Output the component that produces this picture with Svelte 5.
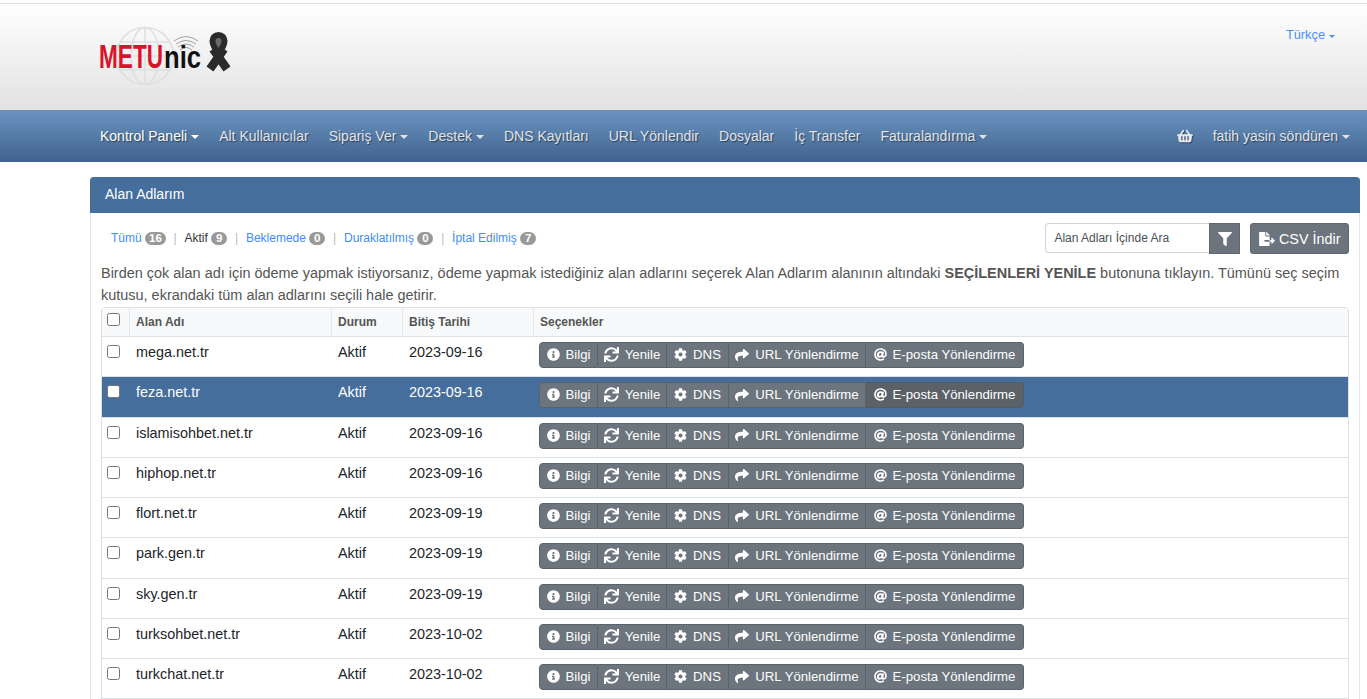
<script>
  // --- DATA ---
  const menu = [
    { label: "Kontrol Paneli", caret: true, active: true },
    { label: "Alt Kullanıcılar" },
    { label: "Sipariş Ver", caret: true },
    { label: "Destek", caret: true },
    { label: "DNS Kayıtları" },
    { label: "URL Yönlendir" },
    { label: "Dosyalar" },
    { label: "İç Transfer" },
    { label: "Faturalandırma", caret: true }
  ];

  const tabs = [
    { label: "Tümü", count: 16 },
    { label: "Aktif", count: 9, current: true },
    { label: "Beklemede", count: 0 },
    { label: "Duraklatılmış", count: 0 },
    { label: "İptal Edilmiş", count: 7 }
  ];

  const domains = [
    { name: "mega.net.tr", end: "2023-09-16" },
    { name: "feza.net.tr", end: "2023-09-16", hover: true },
    { name: "islamisohbet.net.tr", end: "2023-09-16" },
    { name: "hiphop.net.tr", end: "2023-09-16" },
    { name: "flort.net.tr", end: "2023-09-19" },
    { name: "park.gen.tr", end: "2023-09-19" },
    { name: "sky.gen.tr", end: "2023-09-19" },
    { name: "turksohbet.net.tr", end: "2023-10-02" },
    { name: "turkchat.net.tr", end: "2023-10-02" }
  ];

  const icons = {
    info: "M256 8C119 8 8 119.083 8 256c0 136.997 111.083 248 248 248s248-111.003 248-248C504 119.083 392.997 8 256 8zm0 110c23.196 0 42 18.804 42 42s-18.804 42-42 42-42-18.804-42-42 18.804-42 42-42zm56 254c0 6.627-5.373 12-12 12h-88c-6.627 0-12-5.373-12-12v-24c0-6.627 5.373-12 12-12h12v-64h-12c-6.627 0-12-5.373-12-12v-24c0-6.627 5.373-12 12-12h64c6.627 0 12 5.373 12 12v100h12c6.627 0 12 5.373 12 12v24z",
    sync: "M440.65 12.57l4 82.77A247.16 247.16 0 0 0 255.83 8C134.73 8 33.91 94.92 12.29 209.82A12 12 0 0 0 24.09 224h49.05a12 12 0 0 0 11.67-9.26 175.91 175.91 0 0 1 317-56.94l-101.46-4.86a12 12 0 0 0-12.57 12v47.41a12 12 0 0 0 12 12H500a12 12 0 0 0 12-12V12a12 12 0 0 0-12-12h-47.37a12 12 0 0 0-11.98 12.57zM255.83 432a175.61 175.61 0 0 1-146-77.8l101.8 4.87a12 12 0 0 0 12.57-12v-47.4a12 12 0 0 0-12-12H12a12 12 0 0 0-12 12V500a12 12 0 0 0 12 12h47.35a12 12 0 0 0 12-12.6l-4.15-82.57A247.17 247.17 0 0 0 255.83 504c121.11 0 221.93-86.92 243.55-201.82a12 12 0 0 0-11.8-14.18h-49.05a12 12 0 0 0-11.67 9.26A175.86 175.86 0 0 1 255.83 432z",
    cog: "M487.4 315.7l-42.6-24.6c4.3-23.2 4.3-47 0-70.2l42.6-24.6c4.9-2.8 7.1-8.6 5.5-14-11.1-35.6-30-67.8-54.7-94.6-3.8-4.1-10-5.1-14.8-2.3L380.8 110c-17.9-15.4-38.5-27.3-60.8-35.1V25.8c0-5.6-3.9-10.5-9.4-11.7-36.7-8.2-74.3-7.8-109.2 0-5.5 1.2-9.4 6.1-9.4 11.7V75c-22.2 7.9-42.8 19.8-60.8 35.1L88.7 85.5c-4.9-2.8-11-1.9-14.8 2.3-24.7 26.7-43.6 58.9-54.7 94.6-1.7 5.4.6 11.2 5.5 14L67.3 221c-4.3 23.2-4.3 47 0 70.2l-42.6 24.6c-4.9 2.8-7.1 8.6-5.5 14 11.1 35.6 30 67.8 54.7 94.6 3.8 4.1 10 5.1 14.8 2.3l42.6-24.6c17.9 15.4 38.5 27.3 60.8 35.1v49.2c0 5.6 3.9 10.5 9.4 11.7 36.7 8.2 74.3 7.8 109.2 0 5.5-1.2 9.4-6.1 9.4-11.7v-49.2c22.2-7.9 42.8-19.8 60.8-35.1l42.6 24.6c4.9 2.8 11 1.9 14.8-2.3 24.7-26.7 43.6-58.9 54.7-94.6 1.5-5.5-.7-11.3-5.6-14.1zM256 336c-44.1 0-80-35.9-80-80s35.9-80 80-80 80 35.9 80 80-35.9 80-80 80z",
    share: "M503.691 189.836L327.687 37.851C312.281 24.546 288 35.347 288 56.015v80.053C127.371 137.907 0 170.1 0 322.326c0 61.441 39.581 122.309 83.333 154.132 13.653 9.931 33.111-2.533 28.077-18.631C66.066 312.814 132.917 274.316 288 272.085V360c0 20.7 24.3 31.453 39.687 18.164l176.004-152c11.071-9.562 11.086-26.753 0-36.328z",
    at: "M256 8C118.941 8 8 118.919 8 256c0 137.059 110.919 248 248 248 48.154 0 95.342-14.14 135.408-40.223 12.005-7.815 14.625-24.288 5.552-35.372l-10.177-12.433c-7.671-9.371-21.179-11.667-31.373-5.129C325.92 429.757 291.314 440 256 440c-101.458 0-184-82.542-184-184S154.542 72 256 72c100.139 0 184 57.619 184 160 0 38.786-21.093 79.742-58.17 83.693-17.349-.454-16.91-12.857-13.476-30.024l23.433-121.11C394.653 149.75 383.308 136 368.225 136h-44.981a13.518 13.518 0 0 0-13.432 11.993l-.01.092c-14.697-17.901-40.448-21.775-59.971-21.775-74.58 0-137.831 62.234-137.831 151.46 0 65.303 36.785 105.87 96 105.87 26.984 0 57.369-15.637 74.991-38.333 9.522 34.104 40.613 34.103 70.71 34.103C462.609 379.41 504 307.798 504 232 504 95.653 394.023 8 256 8zm-21.68 304.43c-22.249 0-36.07-15.623-36.07-40.771 0-44.993 30.779-72.729 58.63-72.729 22.292 0 35.601 15.241 35.601 40.77 0 45.061-33.875 72.73-58.161 72.73z",
    basket: "M576 216v16c0 13.255-10.745 24-24 24h-8l-26.113 182.788C514.509 462.435 494.257 480 470.37 480H105.63c-23.887 0-44.139-17.565-47.518-41.212L32 256h-8c-13.255 0-24-10.745-24-24v-16c0-13.255 10.745-24 24-24h67.341l106.78-146.821c10.395-14.292 30.407-17.453 44.701-7.058 14.293 10.395 17.453 30.408 7.058 44.701L170.477 192h235.046L326.12 82.821c-10.395-14.292-7.234-34.306 7.059-44.701 14.291-10.395 34.306-7.235 44.701 7.058L484.659 192H552c13.255 0 24 10.745 24 24zM312 392V280c0-13.255-10.745-24-24-24s-24 10.745-24 24v112c0 13.255 10.745 24 24 24s24-10.745 24-24zm112 0V280c0-13.255-10.745-24-24-24s-24 10.745-24 24v112c0 13.255 10.745 24 24 24s24-10.745 24-24zm-224 0V280c0-13.255-10.745-24-24-24s-24 10.745-24 24v112c0 13.255 10.745 24 24 24s24-10.745 24-24z",
    filter: "M487.976 0H24.028C2.71 0-8.047 25.866 7.058 40.971L192 225.941V432c0 7.831 3.821 15.17 10.237 19.662l80 55.98C298.02 518.69 320 507.493 320 487.98V225.941l184.947-184.97C520.021 25.896 509.338 0 487.976 0z",
    fileExport: "M384 121.9c0-6.3-2.5-12.4-7-16.9L279.1 7c-4.5-4.5-10.6-7-17-7H256v128h128v-6.1zM192 336v-32c0-8.84 7.16-16 16-16h176V160H248c-13.2 0-24-10.8-24-24V0H24C10.7 0 0 10.7 0 24v464c0 13.3 10.7 24 24 24h336c13.3 0 24-10.7 24-24V352H208c-8.84 0-16-7.16-16-16zm379.05-28.02l-95.7-96.43c-10.06-10.14-27.36-3.01-27.36 11.27V288H384v64h63.99v65.18c0 14.28 17.29 21.41 27.36 11.27l95.7-96.43c6.6-6.65 6.6-17.39 0-24.04z"
  };

  const actions = [
    { label: "Bilgi", icon: "info", w: 59, size: 13 },
    { label: "Yenile", icon: "sync", w: 69, size: 15 },
    { label: "DNS", icon: "cog", w: 62, size: 13 },
    { label: "URL Yönlendirme", icon: "share", w: 137, size: 14 },
    { label: "E-posta Yönlendirme", icon: "at", w: 158, size: 13 }
  ];
</script>

<div class="page">
  <header class="top">
    <div class="logo">
      <svg width="140" height="66" viewBox="0 0 140 66">
        <!-- globe -->
        <g fill="none" stroke="#e0e0e0" stroke-width="1.6">
          <circle cx="46" cy="30" r="28.5" />
          <ellipse cx="46" cy="30" rx="14" ry="28.5" />
          <path d="M46 1.5v57M21 16h50M21 44h50M17.5 30h57" />
        </g>
        <!-- wifi arcs -->
        <g fill="none" stroke="#9a9a9a" stroke-width=".9">
          <path d="M75 15q12-9 24 0" />
          <path d="M77 18q10-7 20 0" />
          <path d="M79 21q8-6 16 0" />
          <path d="M81 24q6-5 12 0" />
        </g>
        <text class="logo-metu" x="0" y="42" textLength="64" lengthAdjust="spacingAndGlyphs">METU</text>
        <text class="logo-nic" x="65" y="42" textLength="37" lengthAdjust="spacingAndGlyphs">nic</text>
        <!-- ribbon -->
        <path d="M125 23 L111 43 M114 23 L128 43" stroke="#2b2b2b" stroke-width="8.500" fill="none" />
        <path d="M119.500 9c-3.500 0-6 2.500-6 6 0 3.500 2.600 8 6 12 3.400-4 6-8.500 6-12 0-3.500-2.500-6-6-6z" fill="#6a6a6a" stroke="#2b2b2b" stroke-width="6" />
      </svg>
    </div>
    <a class="lang" href="#lang">Türkçe<span class="caret small"></span></a>
  </header>

  <nav class="nav">
    <ul class="nav-left">
      {#each menu as m}
        <li class:active={m.active}>{m.label}{#if m.caret}<span class="caret"></span>{/if}</li>
      {/each}
    </ul>
    <div class="nav-right">
      <svg class="basket" viewBox="0 0 576 512"><path d={icons.basket} /></svg>
      <span>fatih yasin söndüren<span class="caret"></span></span>
    </div>
  </nav>

  <section class="panel">
    <h2 class="panel-head">Alan Adlarım</h2>
    <div class="panel-body">
      <div class="toolbar">
        <div class="tabs">
          {#each tabs as t, i}
            {#if i > 0}<span class="sep">|</span>{/if}
            <span class="tab" class:current={t.current}>{t.label} <span class="count">{t.count}</span></span>
          {/each}
        </div>
        <div class="tools">
          <div class="search">
            <span class="search-input">Alan Adları İçinde Ara</span>
            <span class="search-btn"><svg viewBox="0 0 512 512"><path d={icons.filter} /></svg></span>
          </div>
          <span class="csv"><svg viewBox="0 0 576 512"><path d={icons.fileExport} /></svg>CSV İndir</span>
        </div>
      </div>

      <p class="note">Birden çok alan adı için ödeme yapmak istiyorsanız, ödeme yapmak istediğiniz alan adlarını seçerek Alan Adlarım alanının altındaki <b>SEÇİLENLERİ YENİLE</b> butonuna tıklayın. Tümünü seç seçim kutusu, ekrandaki tüm alan adlarını seçili hale getirir.</p>

      <div class="table">
        <div class="row head">
          <div class="cell c-check"><span class="check"></span></div>
          <div class="cell c-name">Alan Adı</div>
          <div class="cell c-status">Durum</div>
          <div class="cell c-date">Bitiş Tarihi</div>
          <div class="cell c-opts">Seçenekler</div>
        </div>
        {#each domains as d}
          <div class="row body" class:hover={d.hover}>
            <div class="cell c-check"><span class="check"></span></div>
            <div class="cell c-name">{d.name}</div>
            <div class="cell c-status">Aktif</div>
            <div class="cell c-date">{d.end}</div>
            <div class="cell c-opts">
              <div class="btn-group">
                {#each actions as a, i}
                  <span class="btn" class:btn-hover={d.hover && i === 4} style="width: {a.w}px">
                    <svg width={a.size} height={a.size} viewBox="0 0 512 512"><path d={icons[a.icon]} /></svg>{a.label}
                  </span>
                {/each}
              </div>
            </div>
          </div>
        {/each}
      </div>
    </div>
  </section>
</div>

<style>
  :global(html), :global(body) { overflow: hidden; background: #fff; }

  .page {
    height: 699px;
    overflow: hidden;
    font-family: "Liberation Sans", Arial, sans-serif;
    font-size: 14px;
    color: #212529;
  }

  /* --- HEADER --- */
  .top {
    height: 106px;
    margin-top: 3px;
    border-top: 1px solid #ddd;
    background: linear-gradient(to bottom, #fff 0%, #e2e2e2 100%);
    display: flex;
    justify-content: space-between;
    padding: 0 32px 0 99px;
  }
  .logo { padding-top: 22px; height: 66px; }
  .logo-metu { font: bold 33px "Liberation Sans", sans-serif; fill: #d9132a; }
  .logo-nic { font: bold 32px "Liberation Sans", sans-serif; fill: #111; }
  .lang { color: #4a90f5; font-size: 12.8px; text-decoration: none; padding-top: 23px; height: 16px; }

  .caret {
    display: inline-block;
    margin-left: 4px;
    vertical-align: 2px;
    border-top: 4.5px solid currentColor;
    border-left: 4.5px solid transparent;
    border-right: 4.5px solid transparent;
  }
  .caret.small {
    border-top-width: 3.5px;
    border-left-width: 3.5px;
    border-right-width: 3.5px;
    vertical-align: 1px;
  }

  /* --- NAV --- */
  .nav {
    height: 52px;
    background: linear-gradient(to bottom, #6b93c0 0%, #40638e 100%);
    display: flex;
    align-items: center;
    justify-content: space-between;
    padding: 0 17px 0 100px;
    color: #e0e4ea;
    text-shadow: 1px 1px 1px rgba(0, 0, 0, .45);
  }
  .nav-left { display: flex; gap: 20px; list-style: none; margin: 0; padding: 0; }
  .nav-left li.active { color: #fff; }
  .nav-right { display: flex; align-items: center; gap: 20px; }
  .basket { width: 16px; height: 14px; fill: #e6e8ec; filter: drop-shadow(1px 1px 0 rgba(0,0,0,.4)); }

  /* --- PANEL --- */
  .panel {
    margin: 15px 7px 0 90px;
    border: 1px solid #e3e5e8;
    border-top: 0;
    border-radius: 4px 4px 0 0;
  }
  .panel-head {
    margin: 0 -1px;
    height: 36px;
    line-height: 35px;
    padding-left: 15px;
    background: #456e9c;
    color: #fff;
    font-size: 14px;
    font-weight: normal;
    border-radius: 4px 4px 0 0;
  }
  .panel-body { padding: 10px 10px 0; }

  .toolbar { display: flex; justify-content: space-between; align-items: flex-start; height: 33px; }
  .tabs { display: flex; align-items: center; font-size: 12px; padding: 8px 0 0 10px; color: #aaa; }
  .tab { color: #3f8df5; }
  .tab.current { color: #333; }
  .sep { margin: 0 7.8px; color: #bbb; }
  .count {
    display: inline-block;
    box-sizing: border-box;
    background: #999;
    color: #fff;
    font-weight: bold;
    font-size: 11.5px;
    line-height: 13px;
    border-radius: 7px;
    padding: 0 4px;
    min-width: 16px;
    text-align: center;
  }

  .tools { display: flex; gap: 10px; }
  .search { display: flex; height: 31px; }
  .search-input {
    width: 164px;
    height: 30px;
    box-sizing: border-box;
    border: 1px solid #ced4da;
    border-right: 0;
    border-radius: 4px 0 0 4px;
    padding-left: 8px;
    line-height: 28px;
    font-size: 12px;
    color: #495057;
  }
  .search-btn {
    width: 31px;
    background: #6c757d;
    border: 1px solid #5f676e;
    box-sizing: border-box;
    display: flex;
    align-items: center;
    justify-content: center;
  }
  .search-btn svg { width: 14px; height: 14px; fill: #fff; }
  .csv {
    display: flex;
    align-items: center;
    gap: 4px;
    height: 31px;
    box-sizing: border-box;
    padding: 0 7.5px;
    background: #6c757d;
    border: 1px solid #5f676e;
    border-radius: 3px;
    color: #fff;
    font-size: 14.4px;
  }
  .csv svg { width: 16px; height: 14px; fill: #fff; }

  .note {
    margin: 7px 0 0;
    font-size: 14.46px;
    line-height: 21.6px;
    color: #555;
    height: 44px;
  }

  /* --- TABLE --- */
  .table {
    border: 1px solid #dee2e6;
    border-bottom: 0;
    border-radius: 4px 4px 0 0;
    font-size: 14.4px;
  }
  .row { display: flex; }
  .row.head {
    background: #f8f9fa;
    height: 28px;
    border-bottom: 1px solid #dee2e6;
    font-size: 12px;
    font-weight: bold;
    color: #555;
  }
  .row.head .cell { border-right: 1px solid #e6e9ec; line-height: 28px; }
  .row.head .c-opts { border-right: 0; }
  .row.head .c-check { padding-top: 5px; }
  .row.body {
    height: 39.25px;
    border-bottom: 1px solid #dee2e6;
    background: #fff;
  }
  .row.body .cell { padding-top: 7px; }
  .row.body.hover { background: #456e9c; color: #fff; }
  .cell { box-sizing: border-box; padding-left: 6px; }
  .c-check { width: 28px; padding-left: 5px; }
  .c-name { width: 202px; }
  .c-status { width: 71px; }
  .c-date { width: 131px; }
  .c-opts { flex: 1; }
  .row.body .c-opts { padding-top: 5px; padding-left: 5px; }
  .row.body .c-check { padding-top: 8px; }

  .check {
    display: block;
    width: 13px;
    height: 13px;
    box-sizing: border-box;
    background: #fff;
    border: 1px solid #767676;
    border-radius: 2.5px;
  }

  .btn-group { display: inline-flex; height: 26px; }
  .btn {
    box-sizing: border-box;
    display: flex;
    align-items: center;
    justify-content: center;
    gap: 6px;
    padding-bottom: 1px;
    background: #6c757d;
    border: 1px solid #5b636a;
    border-left-width: 0;
    color: #fff;
    font-size: 13.2px;
    white-space: nowrap;
  }
  .btn:first-child { border-left-width: 1px; border-radius: 4px 0 0 4px; }
  .btn:last-child { border-radius: 0 4px 4px 0; }
  .btn svg { fill: #fff; flex: none; }
  .btn-hover { background: #5a6268; border-color: #545b62; }
</style>
